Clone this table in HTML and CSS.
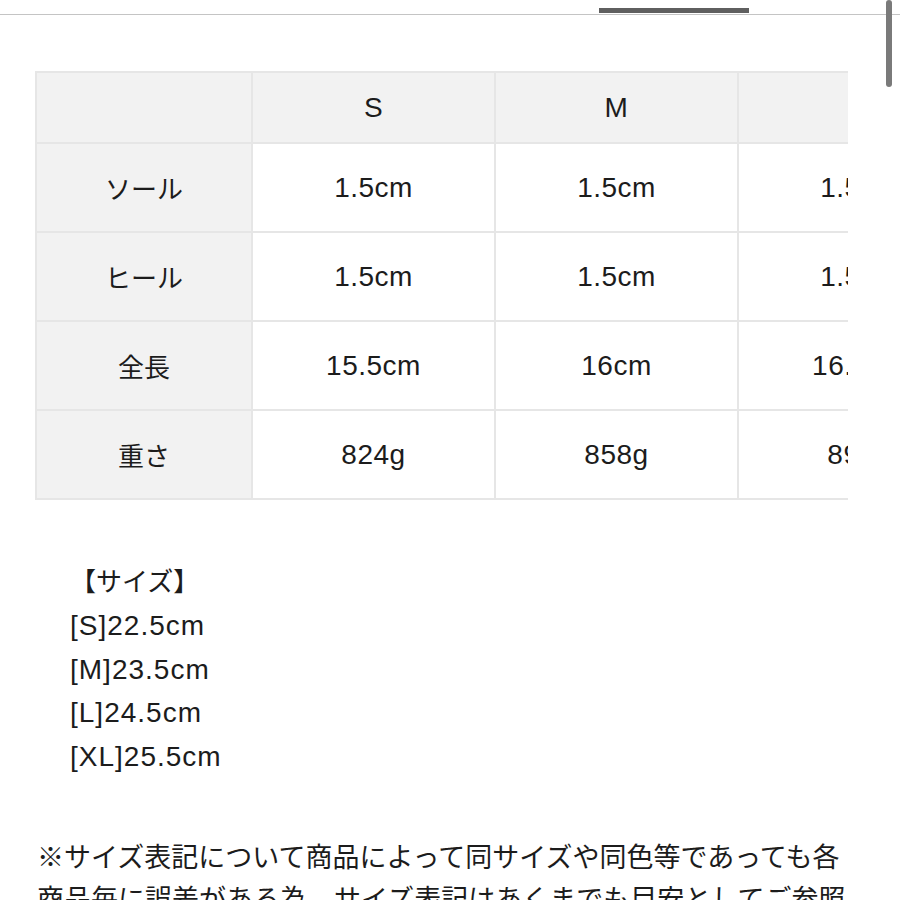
FILE: index.html
```html
<!DOCTYPE html>
<html lang="ja">
<head>
<meta charset="utf-8">
<link rel="stylesheet" href="styles.css">
</head>
<body>
<div class="page">
  <div class="tabs"><div class="tab-indicator"></div></div>
  <div class="table-wrap">
    <table class="size-table">
      <colgroup>
        <col class="c-label"><col class="c-val"><col class="c-val"><col class="c-val"><col class="c-val">
      </colgroup>
      <tr class="head">
        <th></th><th class="num">S</th><th class="num">M</th><th class="num">L</th><th class="num">XL</th>
      </tr>
      <tr>
        <th class="label">ソール</th><td class="num">1.5cm</td><td class="num">1.5cm</td><td class="num">1.5cm</td><td class="num">1.5cm</td>
      </tr>
      <tr>
        <th class="label">ヒール</th><td class="num">1.5cm</td><td class="num">1.5cm</td><td class="num">1.5cm</td><td class="num">1.5cm</td>
      </tr>
      <tr>
        <th class="label">全長</th><td class="num">15.5cm</td><td class="num">16cm</td><td class="num">16.5cm</td><td class="num">17cm</td>
      </tr>
      <tr>
        <th class="label">重さ</th><td class="num">824g</td><td class="num">858g</td><td class="num">892g</td><td class="num">926g</td>
      </tr>
    </table>
  </div>
  <div class="sizes">
    <div class="sizes-title">【サイズ】</div>
    <div class="sizes-line">[S]22.5cm</div>
    <div class="sizes-line">[M]23.5cm</div>
    <div class="sizes-line">[L]24.5cm</div>
    <div class="sizes-line">[XL]25.5cm</div>
  </div>
  <p class="note">※サイズ表記について商品によって同サイズや同色等であっても各商品毎に誤差がある為、サイズ表記はあくまでも目安としてご参照ください。</p>
</div>
<div class="scroll-thumb"></div>
</body>
</html>
```
FILE: styles.css
```css
html, body {
  margin: 0;
  padding: 0;
  background: #ffffff;
  overflow: hidden;
}
body {
  width: 900px;
  height: 900px;
  position: relative;
  color: #1c1c1c;
  font-family: "Liberation Sans", "Noto Sans CJK JP", sans-serif;
}
.page {
  width: 900px;
}
.tabs {
  height: 15px;
  border-bottom: 1px solid #c4c4c4;
  display: flex;
  align-items: flex-end;
  padding-left: 599px;
  box-sizing: border-box;
}
.tab-indicator {
  width: 150px;
  height: 5px;
  margin-bottom: 1px;
  background: #5f5f5f;
}
.table-wrap {
  margin-top: 56px;
  margin-left: 35px;
  width: 813px;
  overflow: hidden;
}
.size-table {
  border-collapse: collapse;
  table-layout: fixed;
  width: 1188px;
}
.c-label { width: 216px; }
.c-val { width: 243px; }
.size-table th,
.size-table td {
  border: 2px solid #e6e6e6;
  padding: 0;
  text-align: center;
  vertical-align: middle;
  font-weight: normal;
}
.size-table tr { height: 89px; }
.size-table tr.head { height: 71px; }
.size-table tr.head th { background: #f2f2f2; }
.size-table th.label {
  background: #f2f2f2;
  font-family: "Noto Sans CJK JP", sans-serif;
  font-size: 26px;
}
.num {
  font-size: 28px;
  letter-spacing: 0.5px;
}
.sizes {
  margin-top: 58px;
  padding-left: 70px;
  line-height: 43.5px;
}
.sizes-title {
  font-family: "Noto Sans CJK JP", sans-serif;
  font-size: 26px;
  height: 46px;
}
.sizes-line {
  font-size: 28px;
  letter-spacing: 1px;
}
.note {
  margin: 57px 0 0 37px;
  width: 820px;
  font-family: "Noto Sans CJK JP", sans-serif;
  font-size: 27px;
  line-height: 42px;
}
.scroll-thumb {
  position: absolute;
  top: 0;
  left: 886px;
  width: 6px;
  height: 87px;
  border-radius: 3px;
  background: #7a7a7a;
}
```
